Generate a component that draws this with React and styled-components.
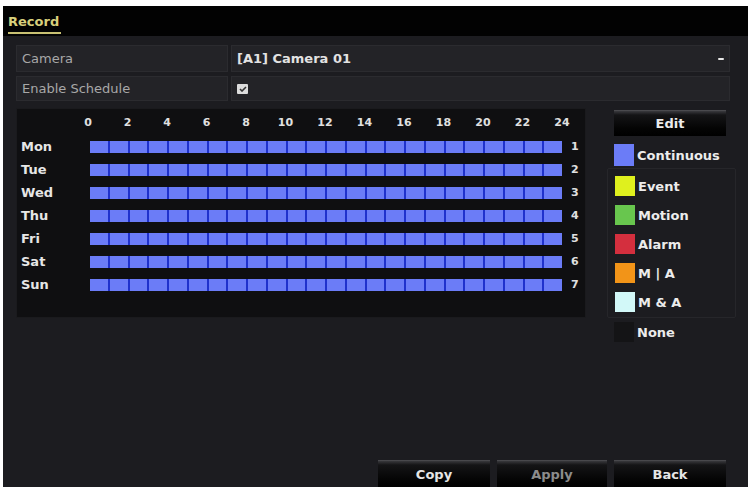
import React from 'react';
import styled, { createGlobalStyle } from 'styled-components';

const GlobalStyle = createGlobalStyle`
  html, body {
    margin: 0;
    padding: 0;
    background: #ffffff;
  }
  body {
    font-family: "DejaVu Sans", Verdana, sans-serif;
  }
`;

const Frame = styled.div`
  width: 748px;
  height: 487px;
  box-sizing: border-box;
  border-top: 6px solid #ffffff;
  border-left: 3px solid #ffffff;
  background: #1c1c20;
  display: flex;
  flex-direction: column;
  overflow: hidden;
`;

const Header = styled.div`
  height: 30px;
  background: #020202;
  padding-left: 5px;
  display: flex;
  align-items: flex-end;
`;

const Title = styled.div`
  color: #d8d07c;
  font-weight: bold;
  font-size: 13px;
  padding: 0 2px 3px 0;
  border-bottom: 2px solid #c8c072;
  margin-bottom: 2px;
`;

const Body = styled.div`
  flex: 1;
  display: flex;
  flex-direction: column;
  padding: 9px 12px 0 13px;
`;

const FieldRow = styled.div`
  display: grid;
  grid-template-columns: 212px 1fr;
  gap: 3px;
  height: ${(p) => p.$h}px;
  margin: 0 6px 4px 0;
`;

const Cell = styled.div`
  background: #232327;
  border: 1px solid #2b2b2f;
  display: flex;
  align-items: center;
  padding: 0 5px;
  font-size: 13px;
  color: ${(p) => (p.$value ? '#e2e2e2' : '#a8a8a8')};
  font-weight: ${(p) => (p.$value ? 'bold' : 'normal')};
`;

const Caret = styled.span`
  margin-left: auto;
  width: 6px;
  height: 2px;
  background: #e8e8e8;
  border-radius: 1px;
`;

const Check = styled.span`
  width: 11px;
  height: 10px;
  background: #dcdcdc;
  border-radius: 1px;
  display: flex;
  align-items: center;
  justify-content: center;
`;

const Schedule = styled.div`
  display: flex;
  margin-top: 3px;
`;

const GridPanel = styled.div`
  flex-shrink: 0;
  width: 570px;
  height: 210px;
  background: #0f0f11;
  border: 1px solid #1a1a1d;
  box-sizing: border-box;
  display: grid;
  grid-template-columns: 73px 472px 1fr;
  grid-auto-rows: 23px;
  grid-template-rows: 26px;
  align-items: center;
`;

const DayLabel = styled.div`
  color: #e6e6e6;
  font-weight: bold;
  font-size: 13px;
  padding-left: 4px;
`;

const HourAxis = styled.div`
  display: flex;
  justify-content: space-between;
  margin: 0 -9px 0 -11px;
`;

const Hour = styled.span`
  width: 18px;
  text-align: center;
  color: #e0e0e0;
  font-weight: bold;
  font-size: 11px;
`;

const Bar = styled.div`
  height: 12px;
  background: #1f31cc;
  display: grid;
  grid-template-columns: repeat(24, 1fr);
  gap: 2px;
`;

const Segment = styled.span`
  background: #6b7cf7;
`;

const RowNum = styled.div`
  color: #e0e0e0;
  font-weight: bold;
  font-size: 11px;
  padding-left: 9px;
`;

const Side = styled.div`
  flex-shrink: 0;
  width: 129px;
  margin-left: 21px;
  display: flex;
  flex-direction: column;
`;

const Edit = styled.button`
  margin: 2px 0 0 7px;
  width: 112px;
  height: 26px;
  border: none;
  border-top: 1px solid #4a4a4e;
  background: linear-gradient(#3a3a3e 0, #141416 4px, #040404 70%, #000);
  color: #ececec;
  font-family: "DejaVu Sans", Verdana, sans-serif;
  font-weight: bold;
  font-size: 13px;
  padding: 0;
`;

const LegendBox = styled.div`
  border: 1px solid #26262a;
  border-radius: 2px;
  padding: 7px 0 5px 0;
  display: flex;
  flex-direction: column;
  gap: 9px;
`;

const LegendItem = styled.div`
  display: flex;
  align-items: center;
  gap: 3px;
  padding-left: 7px;
  margin-top: ${(p) => p.$mt || 0}px;
  margin-bottom: ${(p) => p.$mb || 0}px;
  color: #ececec;
  font-weight: bold;
  font-size: 13px;
  white-space: nowrap;
`;

const Swatch = styled.span`
  flex-shrink: 0;
  width: 20px;
  height: ${(p) => p.$h || 20}px;
  background: ${(p) => p.$c};
`;

const Footer = styled.div`
  margin-top: auto;
  display: flex;
  justify-content: flex-end;
  gap: 7px;
  padding-right: 22px;
`;

const FootButton = styled.button`
  width: ${(p) => p.$w}px;
  height: 27px;
  border: none;
  border-top: 1px solid #48484c;
  background: linear-gradient(#38383c 0, #141416 4px, #050505 70%, #000);
  color: ${(p) => (p.$disabled ? '#8c8c8c' : '#e6e6e6')};
  font-family: "DejaVu Sans", Verdana, sans-serif;
  font-weight: bold;
  font-size: 13px;
  padding: 0;
`;

const days = ['Mon', 'Tue', 'Wed', 'Thu', 'Fri', 'Sat', 'Sun'];
const hours = [0, 2, 4, 6, 8, 10, 12, 14, 16, 18, 20, 22, 24];
const legend = [
  { label: 'Event', color: '#dff01e' },
  { label: 'Motion', color: '#68c64e' },
  { label: 'Alarm', color: '#d42f3e' },
  { label: 'M | A', color: '#f29418' },
  { label: 'M & A', color: '#d2f8f8' },
];

export default function App() {
  return (
    <>
      <GlobalStyle />
      <Frame>
        <Header>
          <Title>Record</Title>
        </Header>
        <Body>
          <FieldRow $h={27}>
            <Cell>Camera</Cell>
            <Cell $value>
              [A1] Camera 01
              <Caret />
            </Cell>
          </FieldRow>
          <FieldRow $h={25}>
            <Cell>Enable Schedule</Cell>
            <Cell $value>
              <Check>
                <svg width="8" height="6" viewBox="0 0 8 6">
                  <path d="M1 3 L3 5 L7 1" stroke="#333" strokeWidth="1.6" fill="none" />
                </svg>
              </Check>
            </Cell>
          </FieldRow>
          <Schedule>
            <GridPanel>
              <span />
              <HourAxis>
                {hours.map((h) => (
                  <Hour key={h}>{h}</Hour>
                ))}
              </HourAxis>
              <span />
              {days.map((d, i) => (
                <React.Fragment key={d}>
                  <DayLabel>{d}</DayLabel>
                  <Bar>
                    {Array.from({ length: 24 }, (_, k) => (
                      <Segment key={k} />
                    ))}
                  </Bar>
                  <RowNum>{i + 1}</RowNum>
                </React.Fragment>
              ))}
            </GridPanel>
            <Side>
              <Edit>Edit</Edit>
              <LegendItem $mt={8} $mb={2}>
                <Swatch $c="#6b7cf7" $h={22} />
                Continuous
              </LegendItem>
              <LegendBox>
                {legend.map((l) => (
                  <LegendItem key={l.label}>
                    <Swatch $c={l.color} />
                    {l.label}
                  </LegendItem>
                ))}
              </LegendBox>
              <LegendItem $mt={4}>
                <Swatch $c="#141416" />
                None
              </LegendItem>
            </Side>
          </Schedule>
        </Body>
        <Footer>
          <FootButton $w={112}>Copy</FootButton>
          <FootButton $w={110} $disabled>Apply</FootButton>
          <FootButton $w={112}>Back</FootButton>
        </Footer>
      </Frame>
    </>
  );
}
